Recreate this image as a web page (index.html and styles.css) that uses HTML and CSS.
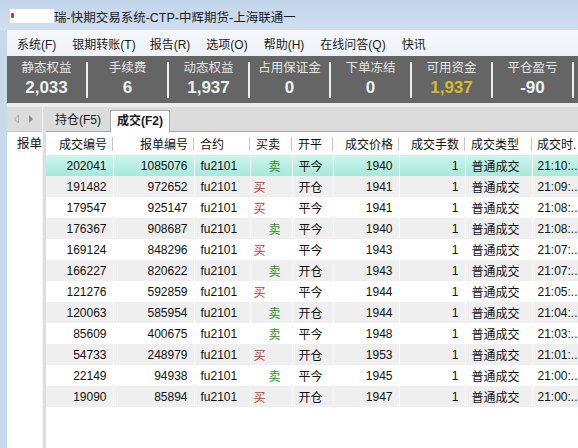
FILE: index.html
```html
<!DOCTYPE html>
<html lang="zh">
<head>
<meta charset="utf-8">
<title>快期交易系统</title>
<link rel="stylesheet" href="styles.css">
</head>
<body>
<div class="win">
  <div class="titlebar">
    <span class="redact"><i class="mark"></i></span>
    <span class="title">瑞-快期交易系统-CTP-中辉期货-上海联通一</span>
  </div>
  <div class="frame">
    <div class="menubar">
      <span class="mi">系统(F)</span>
      <span class="mi">银期转账(T)</span>
      <span class="mi">报告(R)</span>
      <span class="mi">选项(O)</span>
      <span class="mi">帮助(H)</span>
      <span class="mi">在线问答(Q)</span>
      <span class="mi">快讯</span>
    </div>
    <div class="stats">
      <div class="cell"><div class="lbl">静态权益</div><div class="val">2,033</div></div><i class="sep"></i>
      <div class="cell"><div class="lbl">手续费</div><div class="val">6</div></div><i class="sep"></i>
      <div class="cell"><div class="lbl">动态权益</div><div class="val">1,937</div></div><i class="sep"></i>
      <div class="cell"><div class="lbl">占用保证金</div><div class="val">0</div></div><i class="sep"></i>
      <div class="cell"><div class="lbl">下单冻结</div><div class="val">0</div></div><i class="sep"></i>
      <div class="cell"><div class="lbl">可用资金</div><div class="val gold">1,937</div></div><i class="sep"></i>
      <div class="cell"><div class="lbl">平仓盈亏</div><div class="val">-90</div></div><i class="sep"></i>
    </div>
    <div class="gap"></div>
    <div class="work">
      <div class="nav">
        <svg width="22" height="10" viewBox="0 0 22 10">
          <path d="M5.5 1 L1.5 5 L5.5 9 Z" fill="none" stroke="#a8a8a8" stroke-width="1"/>
          <path d="M16 1 L20 5 L16 9 Z" fill="#8a8a8a"/>
        </svg>
      </div>
      <div class="divider"></div>
      <div class="tabs">
        <span class="tab">持仓(F5)</span>
        <span class="tab active">成交(F2)</span>
      </div>
      <div class="lpanel"><div class="lhead">报单</div></div>
      <div class="rpanel">
        <table class="grid">
          <colgroup>
            <col class="c1"><col class="c2"><col class="c3"><col class="c4"><col class="c5"><col class="c6"><col class="c7"><col class="c8"><col class="c9">
          </colgroup>
          <thead>
            <tr>
              <th class="r">成交编号</th><th class="r">报单编号</th><th>合约</th><th>买卖</th><th>开平</th><th class="r">成交价格</th><th class="r">成交手数</th><th>成交类型</th><th class="last">成交时.</th>
            </tr>
          </thead>
          <tbody>
            <tr class="sel"><td class="r">202041</td><td class="r">1085076</td><td>fu2101</td><td class="sell">卖</td><td>平今</td><td class="r">1940</td><td class="r">1</td><td>普通成交</td><td class="t">21:10:..</td></tr>
            <tr><td class="r">191482</td><td class="r">972652</td><td>fu2101</td><td class="buy">买</td><td>开仓</td><td class="r">1941</td><td class="r">1</td><td>普通成交</td><td class="t">21:09:..</td></tr>
            <tr><td class="r">179547</td><td class="r">925147</td><td>fu2101</td><td class="buy">买</td><td>平今</td><td class="r">1941</td><td class="r">1</td><td>普通成交</td><td class="t">21:08:..</td></tr>
            <tr><td class="r">176367</td><td class="r">908687</td><td>fu2101</td><td class="sell">卖</td><td>平今</td><td class="r">1940</td><td class="r">1</td><td>普通成交</td><td class="t">21:08:..</td></tr>
            <tr><td class="r">169124</td><td class="r">848296</td><td>fu2101</td><td class="buy">买</td><td>平今</td><td class="r">1943</td><td class="r">1</td><td>普通成交</td><td class="t">21:07:..</td></tr>
            <tr><td class="r">166227</td><td class="r">820622</td><td>fu2101</td><td class="sell">卖</td><td>开仓</td><td class="r">1943</td><td class="r">1</td><td>普通成交</td><td class="t">21:07:..</td></tr>
            <tr><td class="r">121276</td><td class="r">592859</td><td>fu2101</td><td class="buy">买</td><td>平今</td><td class="r">1944</td><td class="r">1</td><td>普通成交</td><td class="t">21:05:..</td></tr>
            <tr><td class="r">120063</td><td class="r">585954</td><td>fu2101</td><td class="sell">卖</td><td>开仓</td><td class="r">1944</td><td class="r">1</td><td>普通成交</td><td class="t">21:04:..</td></tr>
            <tr><td class="r">85609</td><td class="r">400675</td><td>fu2101</td><td class="sell">卖</td><td>平今</td><td class="r">1948</td><td class="r">1</td><td>普通成交</td><td class="t">21:03:..</td></tr>
            <tr><td class="r">54733</td><td class="r">248979</td><td>fu2101</td><td class="buy">买</td><td>开仓</td><td class="r">1953</td><td class="r">1</td><td>普通成交</td><td class="t">21:01:..</td></tr>
            <tr><td class="r">22149</td><td class="r">94938</td><td>fu2101</td><td class="sell">卖</td><td>平今</td><td class="r">1945</td><td class="r">1</td><td>普通成交</td><td class="t">21:00:..</td></tr>
            <tr><td class="r">19090</td><td class="r">85894</td><td>fu2101</td><td class="buy">买</td><td>开仓</td><td class="r">1947</td><td class="r">1</td><td>普通成交</td><td class="t">21:00:..</td></tr>
          </tbody>
        </table>
      </div>
    </div>
  </div>
</div>
</body>
</html>
```
FILE: styles.css
```css
* { box-sizing: border-box; }
html, body {
  margin: 0;
  padding: 0;
  width: 578px;
  height: 448px;
  overflow: hidden;
}
body {
  background: #c6d9ed;
  font-family: "Liberation Sans", "Noto Sans CJK SC", sans-serif;
  font-size: 12px;
  color: #111;
}
.win {
  width: 578px;
  height: 448px;
  display: flex;
  flex-direction: column;
}
.titlebar {
  height: 30px;
  flex: none;
  display: flex;
  align-items: center;
  padding-left: 10px;
  background: linear-gradient(#c2d5eb, #d0def0);
  color: #1a1a1a;
  font-size: 12.5px;
}
.redact {
  width: 44px;
  height: 14px;
  background: #fff;
  position: relative;
  margin-top: 2px;
}
.mark {
  position: absolute;
  left: 1px;
  top: 4px;
  width: 3px;
  height: 5px;
  background: #d03030;
  border-radius: 1px;
}
.title { margin-left: 0; margin-top: 2px; }
.frame {
  flex: 1;
  margin-left: 7px;
  display: flex;
  flex-direction: column;
  background: #fff;
  min-height: 0;
}
.menubar {
  height: 26px;
  flex: none;
  display: flex;
  align-items: center;
  padding-left: 10px;
  background: linear-gradient(#f6f8fb, #eef2f7);
  font-size: 12px;
  color: #1a1a1a;
}
.mi { margin-right: 16px; }
.mi:nth-child(2) { margin-right: 14px; }
.stats {
  height: 47px;
  flex: none;
  display: flex;
  align-items: center;
  background: #656565;
}
.cell {
  width: 79px;
  text-align: center;
  display: flex;
  flex-direction: column;
  align-items: center;
}
.sep {
  width: 2px;
  height: 36px;
  background: #ededed;
  flex: none;
}
.lbl {
  color: #e4e4e4;
  font-size: 12.5px;
  line-height: 16px;
}
.val {
  color: #eaf2ee;
  font-weight: bold;
  font-size: 17px;
  line-height: 22px;
  margin-top: 1px;
}
.val.gold { color: #d6bb2c; }
.gap {
  height: 4px;
  flex: none;
  background: #ececec;
}
.work {
  flex: 1;
  display: grid;
  grid-template-columns: 35px 4px 1fr;
  grid-template-rows: 25px 1fr;
  min-height: 0;
}
.nav {
  background: #dcdcdc;
  border-bottom: 1px solid #c8c8c8;
  display: flex;
  align-items: center;
  padding-left: 6px;
}
.divider {
  grid-row: 1 / 3;
  grid-column: 2;
  background: #dedede;
  border-left: 1px solid #f4f4f4;
}
.tabs {
  background: #dcdcdc;
  border-bottom: 1px solid #a8a8a8;
  display: flex;
  align-items: flex-end;
  padding-left: 2px;
}
.tab {
  width: 60px;
  height: 21px;
  line-height: 20px;
  text-align: center;
  color: #1a1a1a;
  margin-right: 2px;
}
.tab.active {
  background: #fff;
  border: 1px solid #a8a8a8;
  border-bottom: none;
  height: 22px;
  margin-bottom: -1px;
  font-weight: bold;
  line-height: 21px;
}
.lpanel {
  background: #fff;
  overflow: hidden;
}
.lhead {
  height: 23px;
  line-height: 24px;
  text-align: right;
  font-size: 12.5px;
  color: #111;
  white-space: nowrap;
}
.rpanel {
  background: #fff;
  overflow: hidden;
}
.grid {
  table-layout: fixed;
  border-collapse: collapse;
  width: 532px;
}
.c1 { width: 67px; }
.c2 { width: 81px; }
.c3 { width: 56px; }
.c4 { width: 42px; }
.c5 { width: 41px; }
.c6 { width: 66px; }
.c7 { width: 66px; }
.c8 { width: 67px; }
.c9 { width: 46px; }
th {
  height: 23px;
  font-weight: normal;
  text-align: left;
  padding: 0 6px;
  white-space: nowrap;
  overflow: hidden;
  color: #111;
  position: relative;
  font-size: 12px;
}
th.r { text-align: right; }
th::after {
  content: "";
  position: absolute;
  right: 0;
  top: 5px;
  width: 1px;
  height: 14px;
  background: #c8c8c8;
}
th.last { padding: 0 0 0 5px; }
th.last::after { display: none; }
td {
  height: 21px;
  padding: 0 6px;
  white-space: nowrap;
  overflow: hidden;
  border-right: 1px solid #fff;
  color: #111;
  font-size: 12px;
}
td.t { padding: 0 0 0 5px; border-right: none; }
td.r { text-align: right; }
tbody tr:nth-child(even) td { background: #efefef; }
tr.sel td {
  background: linear-gradient(#cdf5ec, #a9e7d9);
  border-right-color: transparent;
}
td.buy { color: #c2342e; padding-left: 3px; }
td.sell { color: #2f8f2a; padding-left: 18px; }
```
